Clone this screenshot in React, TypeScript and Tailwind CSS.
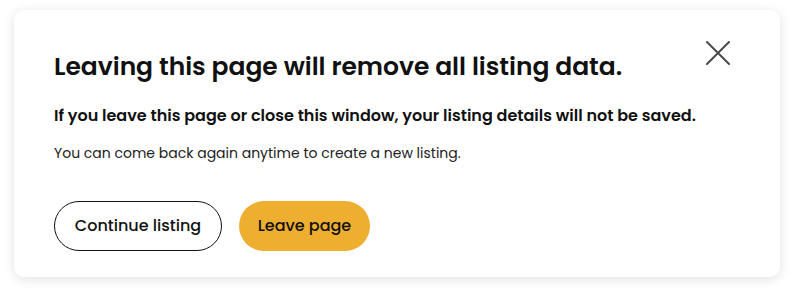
import React from "react";

const font = { fontFamily: "Poppins, Inter, 'Noto Sans', sans-serif" };

export default function App() {
    return (
        <div className="min-h-[295px] w-full bg-white px-[14px] pt-[10px] pb-[18px]" style={font}>
            <div className="relative h-[267px] rounded-[10px] bg-white pl-10 pt-[41px] shadow-[0_2px_12px_rgba(0,0,0,0.12)]">
                {/* close */}
                <button className="absolute right-[50px] top-[31px] h-6 w-6 text-[#4a4a4a]">
                    <svg viewBox="0 0 24 24" className="h-6 w-6" fill="none" stroke="currentColor" strokeWidth="2" strokeLinecap="round">
                        <path d="M1 1L23 23M23 1L1 23" />
                    </svg>
                </button>

                <h2 className="text-[25px] font-semibold leading-[32px] tracking-[-0.03px] text-[#111]">
                    Leaving this page will remove all listing data.
                </h2>
                <p className="mt-[21px] text-[16px] font-semibold leading-6 text-[#111]">
                    If you leave this page or close this window, your listing details will not be saved.
                </p>
                <p className="mt-[15px] text-[14px] leading-5 text-[#222]">
                    You can come back again anytime to create a new listing.
                </p>

                <div className="mt-[38px] flex gap-[17px]">
                    <button className="h-[50px] w-[168px] rounded-full border border-[#111] bg-white text-[16px] font-medium text-[#111]">
                        Continue listing
                    </button>
                    <button className="h-[50px] w-[131px] rounded-full bg-[#eeae30] text-[16px] font-medium text-[#111]">
                        Leave page
                    </button>
                </div>
            </div>
        </div>
    );
}
